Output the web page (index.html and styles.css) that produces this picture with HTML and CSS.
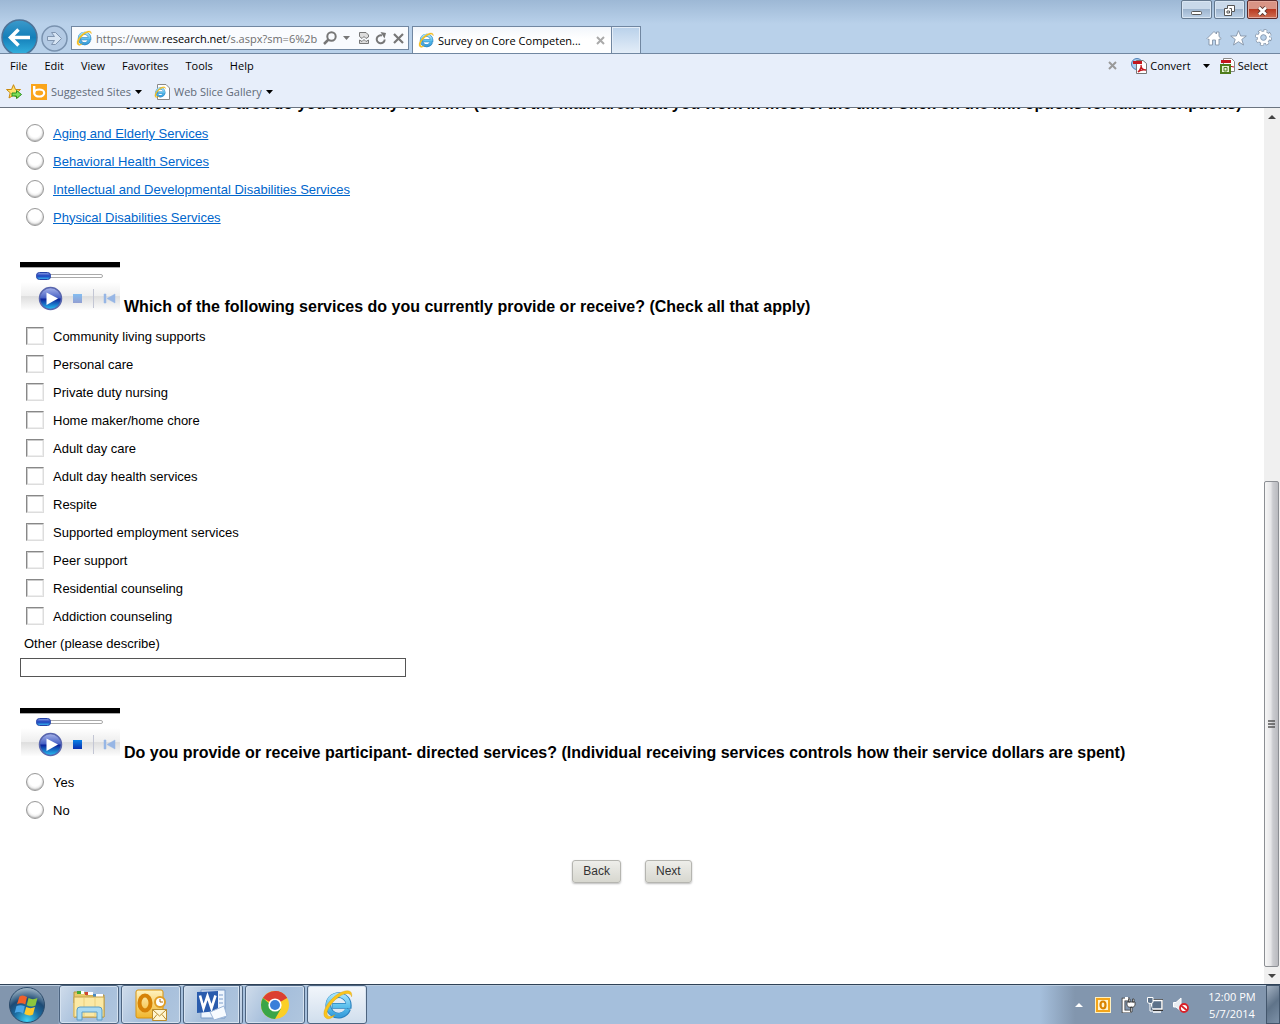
FILE: index.html
```html
<!DOCTYPE html>
<html lang="en">
<head>
    <meta charset="UTF-8">
    <meta name="viewport" content="width=device-width, initial-scale=1.0">
    <title>Survey on Core Competencies</title>
    <link rel="stylesheet" href="styles.css">
</head>
<body>
    <!-- shared icons -->
    <svg class="defs" width="0" height="0" aria-hidden="true">
        <defs>
            <linearGradient id="ieBlue" x1="0" y1="0" x2="0" y2="1">
                <stop offset="0" stop-color="#a5e2fa"/><stop offset="0.6" stop-color="#58bdec"/><stop offset="1" stop-color="#3a9fdc"/>
            </linearGradient>
            <linearGradient id="backBlue" x1="0" y1="0" x2="0" y2="1">
                <stop offset="0" stop-color="#3c9acb"/><stop offset="0.5" stop-color="#147fb9"/><stop offset="1" stop-color="#35b3e0"/>
            </linearGradient>
            <linearGradient id="playBlue" x1="0" y1="0" x2="0" y2="1">
                <stop offset="0" stop-color="#a9b5ea"/><stop offset="0.48" stop-color="#4660c4"/><stop offset="0.52" stop-color="#0b2098"/><stop offset="1" stop-color="#27c4f5"/>
            </linearGradient>
            <linearGradient id="knobBlue" x1="0" y1="0" x2="0" y2="1">
                <stop offset="0" stop-color="#8ba0e6"/><stop offset="0.5" stop-color="#1c3fbc"/><stop offset="1" stop-color="#3cc0f4"/>
            </linearGradient>
            <linearGradient id="stopBlue" x1="0" y1="0" x2="0" y2="1">
                <stop offset="0" stop-color="#0a82e6"/><stop offset="1" stop-color="#0a2fae"/>
            </linearGradient>
            <linearGradient id="stopPale" x1="0" y1="0" x2="0" y2="1">
                <stop offset="0" stop-color="#84bdf0"/><stop offset="1" stop-color="#929fd2"/>
            </linearGradient>
            <linearGradient id="playerBar" x1="0" y1="0" x2="0" y2="1">
                <stop offset="0" stop-color="#ffffff"/><stop offset="0.5" stop-color="#eeeeee"/><stop offset="0.52" stop-color="#dedede"/><stop offset="1" stop-color="#fdfdfd"/>
            </linearGradient>
            <radialGradient id="orb" cx="0.5" cy="0.95" r="0.95">
                <stop offset="0" stop-color="#3fd4f5"/><stop offset="0.4" stop-color="#1b6a9f"/><stop offset="0.65" stop-color="#1d4a74"/><stop offset="1" stop-color="#a8bccb"/>
            </radialGradient>
            <linearGradient id="gold" x1="0" y1="0" x2="0" y2="1">
                <stop offset="0" stop-color="#fff3c0"/><stop offset="1" stop-color="#f0b52c"/>
            </linearGradient>
        </defs>
        <symbol id="ie" viewBox="0 0 32 32">
            <path d="M27 20.500A10.500 10.500 0 1 1 27.600 17.500H10.500" fill="none" stroke="#2a80bd" stroke-width="6"/>
            <path d="M26.500 20.500A10.500 10.500 0 1 1 27.200 17.500H11" fill="none" stroke="url(#ieBlue)" stroke-width="4.400"/>
            <path d="M5 30.500C-2.500 27 5 13 16 5.500C24 0.500 32 0 30.500 8C29.500 3.500 24 3.500 17.500 8C8 15 2.500 25 6.500 28C8.500 29.200 11 28 13.500 26.500C11 29.500 8 31.500 5 30.500Z" fill="#fbc51c" stroke="#d99a0b" stroke-width="0.400"/>
        </symbol>
        <symbol id="player" viewBox="0 0 100 50">
            <path d="M0 0H100V5H0Z" fill="#000"/>
            <path d="M0 5.500H100" stroke="#aaa"/>
            <path d="M1 20H100V48H1Z" fill="url(#playerBar)"/>
            <rect x="28.500" y="12.500" width="54" height="3" rx="1.500" fill="#fff" stroke="#aaa"/>
            <rect x="16.500" y="10.500" width="14" height="7" rx="3" fill="url(#knobBlue)" stroke="#2340a6"/>
            <circle cx="30.500" cy="36.500" r="11" fill="url(#playBlue)" stroke="#5865ad" stroke-width="1.500"/>
            <path d="M26.500 30.500L38 36.500L26.500 43Z" fill="#fff"/>
            <path d="M73.500 27V46" stroke="#c3c6d4"/>
            <path d="M84 32H86V41H84ZM95 32V41L87 36.500Z" fill="#97b6e5" stroke="#97b6e5" stroke-width="0.500"/>
        </symbol>
    </svg>

    <header class="browser">
        <div class="titlebar">
            <button class="back" aria-label="Back to previous page">
                <svg width="37" height="37" viewBox="0 0 37 37"><circle cx="18.500" cy="18.500" r="17.500" fill="url(#backBlue)" stroke="#4f7397" stroke-width="1.500"/><path d="M9 18.500H29M17.500 10.500L9.500 18.500L17.500 26.500" fill="none" stroke="#fff" stroke-width="3.500"/></svg>
            </button>
            <button class="forward" aria-label="Forward">
                <svg width="27" height="27" viewBox="0 0 27 27"><circle cx="13.500" cy="13.500" r="12.500" fill="#b3cae4" stroke="#7992af" stroke-width="1.500"/><path d="M6.500 11.500H13.500L10.500 7.500H14.500L20.500 13.500L14.500 19.500H10.500L13.500 15.500H6.500Z" fill="#d6e4f3" stroke="#8095b0"/></svg>
            </button>
            <div class="address">
                <svg width="16" height="16"><use href="#ie"/></svg>
                <div class="url" role="textbox" aria-label="Address">https://www.<span>research.net</span>/s.aspx?sm=6%2b</div>
                <button aria-label="Search"><svg width="14" height="14" viewBox="0 0 14 14"><circle cx="8.500" cy="5.500" r="4.200" fill="none" stroke="#777" stroke-width="2"/><path d="M5.500 8.500L1 13" stroke="#777" stroke-width="2.500"/></svg></button>
                <button aria-label="Show address list"><svg width="7" height="4" viewBox="0 0 7 4"><path d="M0 0H7L3.500 4Z" fill="#777"/></svg></button>
                <button class="compat" aria-label="Compatibility view"><svg width="10" height="12" viewBox="0 0 10 12"><path d="M0.500 4.500V0.500H7L9.500 3V5L7 6.500L5 4.500L3 6.500ZM0.500 8L3 9.500L5 7.500L7 9.500L9.500 8V11.500H0.500Z" fill="#ddd" stroke="#777"/></svg></button>
                <button aria-label="Refresh"><svg width="12" height="13" viewBox="0 0 12 13"><path d="M7 3.500A4 4 0 1 0 9.700 7.500" fill="none" stroke="#777" stroke-width="2"/><path d="M5.500 0L11 1L9.500 6.500Z" fill="#777"/></svg></button>
                <button aria-label="Stop"><svg width="11" height="11" viewBox="0 0 11 11"><path d="M1 1L10 10M10 1L1 10" stroke="#777" stroke-width="2.200"/></svg></button>
            </div>
            <div class="tab">
                <svg width="16" height="16"><use href="#ie"/></svg>
                <span>Survey on Core Competen...</span>
                <button aria-label="Close tab"><svg width="9" height="9" viewBox="0 0 9 9"><path d="M1 1L8 8M8 1L1 8" stroke="#aaa" stroke-width="2"/></svg></button>
            </div>
            <button class="new-tab" aria-label="New tab"></button>
            <div class="corner">
                <div class="window-buttons">
                    <button aria-label="Minimize"><svg width="13" height="13" viewBox="0 0 13 13"><rect x="1.500" y="7.500" width="10" height="3" rx="1" fill="#fff" stroke="#555"/></svg></button>
                    <button aria-label="Restore"><svg width="13" height="13" viewBox="0 0 13 13"><path d="M4.500 1.500H11.500V7.500H8.500V11.500H1.500V4.500H4.500Z" fill="#fff" stroke="#555"/><path d="M4 7H6.500V9H4ZM6.500 4.500H8.500V7" fill="none" stroke="#555"/></svg></button>
                    <button class="close" aria-label="Close"><svg width="13" height="12" viewBox="0 0 13 12"><path d="M3 2.500L10 9.500M10 2.500L3 9.500" stroke="#59362f" stroke-width="4.500"/><path d="M3 2.500L10 9.500M10 2.500L3 9.500" stroke="#fff" stroke-width="2.500"/></svg></button>
                </div>
                <div class="tools">
                    <button aria-label="Home"><svg width="16" height="16" viewBox="0 0 16 16"><path d="M1 8.500L8 1.500L10.500 4V2H13V6.500L15.200 8.500L14 9.500L13 9V15H9.500V10H6.500V15H3V9L2 9.500Z" fill="#fff" stroke="#8494a8" stroke-width="0.900"/></svg></button>
                    <button aria-label="Favorites"><svg width="17" height="16" viewBox="0 0 17 16"><path d="M8.500 0.700L10.700 6H16.300L11.800 9.400L13.500 15L8.500 11.700L3.500 15L5.200 9.400L0.700 6H6.300Z" fill="#fff" stroke="#8494a8" stroke-width="0.900"/></svg></button>
                    <button aria-label="Settings"><svg width="17" height="17" viewBox="0 0 17 17"><circle cx="8.500" cy="8.500" r="6.700" fill="none" stroke="#8494a8" stroke-width="3.400" stroke-dasharray="3.200 2.060"/><circle cx="8.500" cy="8.500" r="5" fill="none" stroke="#8494a8" stroke-width="3.400"/><circle cx="8.500" cy="8.500" r="6.500" fill="none" stroke="#fff" stroke-width="2.400" stroke-dasharray="2.300 2.805"/><circle cx="8.500" cy="8.500" r="4.500" fill="#b9d1ea" stroke="#fff" stroke-width="2.800"/><circle cx="8.500" cy="8.500" r="2.800" fill="#b9d1ea" stroke="#8494a8" stroke-width="0.800"/></svg></button>
                </div>
            </div>
        </div>

        <div class="menu-row">
            <nav class="menu">
                <a href="#">File</a>
                <a href="#">Edit</a>
                <a href="#">View</a>
                <a href="#">Favorites</a>
                <a href="#">Tools</a>
                <a href="#">Help</a>
            </nav>
            <div class="addons">
                <button aria-label="Close toolbar"><svg width="9" height="9" viewBox="0 0 9 9"><path d="M1 1L8 8M8 1L1 8" stroke="#999" stroke-width="2"/></svg></button>
                <button class="convert">
                    <svg width="17" height="16" viewBox="0 0 17 16"><circle cx="6" cy="6" r="5.500" fill="#a9cdf0" stroke="#4d7fb5"/><path d="M5.500 2.500H12L15.500 5.500V15.500H5.500Z" fill="#fff" stroke="#777"/><path d="M2 3H11V6H2Z" fill="#c3161c"/><path d="M7 14C10 11 10.500 8 10 7C10 11 12 12 15 12C12 11.500 9 12 7 14Z" fill="none" stroke="#c3161c" stroke-width="1.300"/></svg>
                    Convert
                </button>
                <button aria-label="Convert options"><svg width="7" height="4" viewBox="0 0 7 4"><path d="M0 0H7L3.500 4Z" fill="#000"/></svg></button>
                <button class="select">
                    <svg width="16" height="16" viewBox="0 0 16 16"><path d="M3.500 0.500H11.500L14.500 3.500V13.500H3.500Z" fill="#fff" stroke="#888"/><path d="M1 2H11V5H1Z" fill="#c3161c"/><path d="M9 8L14 9" stroke="#c3161c"/><rect x="1" y="7" width="9" height="8" fill="#e9f3d8" stroke="#4f7d1c" stroke-width="2"/><path d="M4 9.500H7V13H4Z" fill="none" stroke="#4f7d1c"/></svg>
                    Select
                </button>
            </div>
        </div>

        <div class="favorites">
            <button aria-label="Add to favorites"><svg width="17" height="16" viewBox="0 0 17 16"><path d="M7.500 0.700L9.500 5.500H14.500L10.800 8.800L12 14L7.500 11.200L3 14L4.200 8.800L0.500 5.500H5.500Z" fill="#ffe16a" stroke="#c9890f"/><path d="M6 9H10.500V6.500L15.500 10.500L10.500 14.500V12H6Z" fill="#7ee05a" stroke="#2b8f1f"/></svg></button>
            <a href="#" class="suggested">
                <svg width="16" height="16" viewBox="0 0 16 16"><path d="M0 0H16V16H0Z" fill="#faa51a"/><path d="M3.200 2V8.500" stroke="#fff" stroke-width="2.400"/><ellipse cx="8.200" cy="9" rx="5" ry="3.500" fill="none" stroke="#fff" stroke-width="2.200"/></svg>
                Suggested Sites
                <svg width="7" height="4" viewBox="0 0 7 4"><path d="M0 0H7L3.500 4Z" fill="#000"/></svg>
            </a>
            <a href="#">
                <svg width="16" height="16" viewBox="0 0 16 16"><path d="M3.500 0.500H12L15.500 4V15.500H3.500Z" fill="#fff" stroke="#888"/><use href="#ie" width="12" height="12" y="2"/></svg>
                Web Slice Gallery
                <svg width="7" height="4" viewBox="0 0 7 4"><path d="M0 0H7L3.500 4Z" fill="#000"/></svg>
            </a>
        </div>
    </header>

    <div class="viewport">
        <main class="page">
            <form class="survey">
                <section class="question">
                    <div class="question-head">
                        <svg class="player" width="100" height="50"><use href="#player"/><rect x="53" y="32" width="9" height="9" fill="url(#stopPale)"/></svg>
                        <h2>Which service area do you currently work in? (Select the main area that you work in most of the time. Click on the link options for full descriptions)</h2>
                    </div>
                    <div class="option"><input type="radio" name="area" aria-label="Aging and Elderly Services"><a href="#">Aging and Elderly Services</a></div>
                    <div class="option"><input type="radio" name="area" aria-label="Behavioral Health Services"><a href="#">Behavioral Health Services</a></div>
                    <div class="option"><input type="radio" name="area" aria-label="Intellectual and Developmental Disabilities Services"><a href="#">Intellectual and Developmental Disabilities Services</a></div>
                    <div class="option"><input type="radio" name="area" aria-label="Physical Disabilities Services"><a href="#">Physical Disabilities Services</a></div>
                </section>

                <section class="question">
                    <div class="question-head">
                        <svg class="player" width="100" height="50"><use href="#player"/><rect x="53" y="32" width="9" height="9" fill="url(#stopPale)"/></svg>
                        <h2>Which of the following services do you currently provide or receive? (Check all that apply)</h2>
                    </div>
                    <label class="option"><input type="checkbox" name="service">Community living supports</label>
                    <label class="option"><input type="checkbox" name="service">Personal care</label>
                    <label class="option"><input type="checkbox" name="service">Private duty nursing</label>
                    <label class="option"><input type="checkbox" name="service">Home maker/home chore</label>
                    <label class="option"><input type="checkbox" name="service">Adult day care</label>
                    <label class="option"><input type="checkbox" name="service">Adult day health services</label>
                    <label class="option"><input type="checkbox" name="service">Respite</label>
                    <label class="option"><input type="checkbox" name="service">Supported employment services</label>
                    <label class="option"><input type="checkbox" name="service">Peer support</label>
                    <label class="option"><input type="checkbox" name="service">Residential counseling</label>
                    <label class="option"><input type="checkbox" name="service">Addiction counseling</label>
                    <label class="other" for="other">Other (please describe)</label>
                    <input type="text" id="other" name="other">
                </section>

                <section class="question">
                    <div class="question-head">
                        <svg class="player" width="100" height="50"><use href="#player"/><rect x="53" y="32" width="9" height="9" fill="url(#stopBlue)"/></svg>
                        <h2>Do you provide or receive participant- directed services? (Individual receiving services controls how their service dollars are spent)</h2>
                    </div>
                    <label class="option"><input type="radio" name="directed">Yes</label>
                    <label class="option"><input type="radio" name="directed">No</label>
                </section>

                <div class="form-buttons">
                    <button type="button">Back</button>
                    <button type="button">Next</button>
                </div>
            </form>
        </main>
        <div class="scrollbar">
            <button aria-label="Scroll up"><svg width="8" height="4" viewBox="0 0 8 4"><path d="M0 4H8L4 0Z" fill="#444"/></svg></button>
            <div class="track"></div>
            <div class="thumb"><svg width="8" height="8" viewBox="0 0 8 8"><path d="M0 1H7M0 4H7M0 7H7" stroke="#555" stroke-width="1.500"/></svg></div>
            <button aria-label="Scroll down"><svg width="8" height="4" viewBox="0 0 8 4"><path d="M0 0H8L4 4Z" fill="#444"/></svg></button>
        </div>
    </div>

    <footer class="taskbar">
        <button class="start" aria-label="Start">
            <svg width="38" height="38" viewBox="0 0 38 38"><circle cx="19" cy="19" r="17.500" fill="url(#orb)" stroke="#2c4b6b"/><path d="M11.500 10.500C14 9 16.500 9.500 19 11L17.300 18.500C14.500 17 12 17 9 18Z" fill="#f0602a"/><path d="M20.500 12C23.500 13.500 26.500 13.500 29.500 12L27.500 19.500C24.500 21 21.500 20.500 18.700 19.200Z" fill="#8cc63e"/><path d="M8.500 20C11.500 18.700 14 18.900 16.800 20.300L15 27.500C12 25.700 9.500 25.700 6.700 27Z" fill="#4aa6e8"/><path d="M18.200 21C21 22.500 24 22.500 27 21L25 28.500C22.500 30 19.500 29.500 16.300 28Z" fill="#fdc92b"/></svg>
        </button>
        <button class="task" aria-label="Windows Explorer">
            <svg width="34" height="32" viewBox="0 0 34 32"><path d="M2 3H12L14 6H32V28H2Z" fill="#e8c869" stroke="#b6913c"/><path d="M5 2H9V5H5Z" fill="#41a832"/><path d="M9 2H12V5H9Z" fill="#fff"/><path d="M13 3H16V6H13Z" fill="#d14432"/><path d="M16 3H21V6H16Z" fill="#fff"/><path d="M21 5H24V8H21Z" fill="#4589c5"/><path d="M24 5H31V8H24Z" fill="#fff"/><path d="M2 8H32V28H2Z" fill="#fbe9a5" stroke="#c5a24b"/><path d="M2 28V14M12 28V9M23 28V9" stroke="#ebcf7c"/><path d="M5 31V21Q5 18 8 18H27Q30 18 30 21V31H25V23H10V31Z" fill="#a9daf3" stroke="#5a9dc6"/></svg>
        </button>
        <button class="task" aria-label="Outlook">
            <svg width="34" height="32" viewBox="0 0 34 32"><rect x="2" y="1" width="27" height="28" rx="2" fill="url(#gold)" stroke="#d9930f"/><ellipse cx="11" cy="14" rx="5.500" ry="7.500" fill="none" stroke="#d68207" stroke-width="4"/><circle cx="26" cy="13" r="5" fill="#fff" stroke="#e09d24" stroke-width="2"/><path d="M26 10V13H29" fill="none" stroke="#b26b00"/><path d="M18.500 20.500H32.500V31.500H18.500Z" fill="#fff6d2" stroke="#b98b2d"/><path d="M18.500 20.500L25.500 27L32.500 20.500M18.500 31L23 25.500M32.500 31L28 25.500" fill="none" stroke="#b98b2d"/></svg>
        </button>
        <button class="task stacked" aria-label="Word">
            <svg width="34" height="32" viewBox="0 0 34 32"><path d="M6 1H30V29H6Z" fill="#eef5fd" stroke="#7a9bc7"/><path d="M24 6H28M24 10H28M24 14H28" stroke="#7d9dcb"/><path d="M2 3L23 2V22L2 24Z" fill="#2a5cad"/><path d="M5 6.500L8.500 19L12.500 7L16.500 19L20.500 6.500" fill="none" stroke="#fff" stroke-width="2.600"/><path d="M15 23L29 17L32 27L19 31Z" fill="#f7fbff" stroke="#9bb5d8"/></svg>
        </button>
        <button class="task" aria-label="Chrome">
            <svg width="30" height="30" viewBox="0 0 30 30"><circle cx="15" cy="15" r="14" fill="#fbcf26"/><path d="M15 15L2.880 8A14 14 0 0 1 27.120 8Z" fill="#db3f32"/><path d="M15 8H27.120A14 14 0 0 0 15 1Z" fill="#db3f32"/><path d="M2.880 8A14 14 0 0 0 15 29L21 18.500H15Z" fill="#3aa547"/><circle cx="15" cy="15" r="6.600" fill="#fff"/><circle cx="15" cy="15" r="5" fill="#3a7fd9"/></svg>
        </button>
        <button class="task active" aria-label="Internet Explorer">
            <svg width="31" height="31"><use href="#ie"/></svg>
        </button>
        <div class="tray">
            <button aria-label="Show hidden icons"><svg width="8" height="4" viewBox="0 0 8 4"><path d="M0 4H8L4 0Z" fill="#fff"/></svg></button>
            <svg width="16" height="16" viewBox="0 0 16 16"><rect x="0.500" y="0.500" width="15" height="15" fill="#f3a51a" stroke="#fff0c0"/><rect x="3" y="3" width="10" height="10" fill="#fff3cf"/><ellipse cx="8" cy="8" rx="2.500" ry="3.500" fill="none" stroke="#d98200" stroke-width="2.200"/></svg>
            <svg width="16" height="16" viewBox="0 0 16 16"><path d="M9 2.500H2.500V14.500H10M4 1H7" fill="none" stroke="#333" stroke-width="3.500"/><path d="M9 2.500H2.500V14.500H10M4 1H7" fill="none" stroke="#fff" stroke-width="2"/><path d="M6 5H14V8Q14 10.500 10 10.500Q6 10.500 6 8ZM7.500 2H9V5H7.500ZM11.500 2H13V5H11.500ZM9.500 10H11V15H9.500Z" fill="#fff" stroke="#333" stroke-width="0.800"/></svg>
            <svg width="16" height="16" viewBox="0 0 16 16"><path d="M4.500 3.500H15.500V12.500H4.500Z" fill="#5d7289" stroke="#333" stroke-width="3"/><path d="M4.500 3.500H15V12H4.500Z" fill="#5d7289" stroke="#fff" stroke-width="1.500"/><path d="M6 15H14" stroke="#fff" stroke-width="1.500"/><path d="M0.500 0.500H6V5Q6 6.500 3.500 6.500Q0.500 6.500 0.500 5ZM3 6V14H6" fill="#5d7289" stroke="#fff"/></svg>
            <svg width="16" height="16" viewBox="0 0 16 16"><path d="M0.500 5.500H3L8 1V14L3 10H0.500Z" fill="#e9edf2" stroke="#fff"/><circle cx="11" cy="11" r="4" fill="#fff" stroke="#d9232a" stroke-width="1.800"/><path d="M8 8.500L14 13.500" stroke="#d9232a" stroke-width="1.800"/></svg>
            <div class="clock">12:00 PM<br>5/7/2014</div>
            <button class="show-desktop" aria-label="Show desktop"></button>
        </div>
    </footer>
</body>
</html>
```

FILE: styles.css
```css
* { box-sizing: border-box; }
body { margin: 0; height: 100vh; display: flex; flex-direction: column; background: #fff; font-family: "Liberation Sans", Arial, sans-serif; font-size: 13px; color: #000; overflow: hidden; }
button { padding: 0; border: none; background: none; font: inherit; color: inherit; display: flex; align-items: center; justify-content: center; }
svg { display: block; flex: none; }
a { color: inherit; text-decoration: none; }
.defs { position: absolute; }

/* browser frame */
.browser { flex: none; background: #e7eefa; border-bottom: 1px solid #6b7480; font-family: "Open Sans", "Segoe UI", sans-serif; font-size: 11px; }
.titlebar { display: flex; align-items: flex-end; height: 54px; padding-left: 1px; background: linear-gradient(#9db8d5, #b9d1ea 24px); border-bottom: 1px solid #7187a1; overflow: hidden; }
.back { height: 34px; align-items: flex-start; }
.forward { margin: 0 3px 1px; }
.address { display: flex; align-items: center; gap: 8px; width: 338px; height: 24px; margin-bottom: 3px; padding: 0 5px 0 4px; background: #f9fbfe; border: 1px solid #7187a1; }
.url { flex: 1; min-width: 0; margin: 0 -4px; white-space: nowrap; color: #6d6d6d; }
.url span { color: #000; }
.address button { margin: 0 -1px; }
.address .compat { margin-left: 2px; }
.tab { display: flex; align-items: center; gap: 4px; width: 200px; height: 27px; margin-left: 3px; padding: 0 6px 0 5px; background: linear-gradient(#f2f6fb, #fff 12px); border: 1px solid #7187a1; border-bottom: none; }
.tab span { flex: 1; white-space: nowrap; }
.new-tab { width: 29px; height: 27px; background: linear-gradient(#b9d1ea, #e3edf8); border: 1px solid #7187a1; border-left: none; border-bottom: none; box-shadow: inset 0 0 0 1px #e3edf8; }
.corner { align-self: stretch; margin-left: auto; display: flex; flex-direction: column; justify-content: space-between; align-items: flex-end; padding: 0 2px 7px 0; }
.window-buttons { display: flex; gap: 2px; }
.window-buttons button { width: 31px; height: 19px; padding-top: 2px; background: linear-gradient(#c9d9ea 50%, #9eb5cf 50%, #bdd1e7); border: 1px solid #65798f; border-radius: 2px; box-shadow: inset 0 0 0 1px #d9e6f3; }
.window-buttons .close { background: linear-gradient(#d99485 45%, #b93a22 50%, #cf6f53); border-color: #5c2a2a; box-shadow: inset 0 0 0 1px #e4a99c; }
.tools { display: flex; gap: 8px; padding-right: 6px; }

.menu-row { display: flex; justify-content: space-between; height: 23px; padding: 0 12px 0 10px; }
.menu { display: flex; align-items: center; gap: 17px; }
.addons { display: flex; align-items: center; gap: 12px; }
.addons button { gap: 2px; }
.convert { margin-left: 2px; }
.select { margin-left: -2px; }
.favorites { display: flex; align-items: center; height: 30px; gap: 8px; padding: 2px 0 2px 6px; color: #5f6a78; }
.favorites a { display: flex; align-items: center; gap: 4px; line-height: 14px; }
.suggested { margin-right: 4px; }

/* survey page */
.viewport { flex: 1; min-height: 0; display: flex; }
.page { flex: 1; min-width: 0; overflow: hidden; }
.survey { margin-top: -49px; padding: 0 20px; }
.question { margin-bottom: 31px; }
.question-head { display: flex; align-items: flex-end; gap: 4px; height: 60px; padding-bottom: 10px; }
h2 { margin: 0 0 -4px; font-size: 16px; line-height: 18px; white-space: nowrap; }
.option { display: flex; align-items: center; gap: 9px; height: 28px; padding-left: 6px; }
.option a { color: #0066cc; text-decoration: underline; }
.option input { appearance: none; flex: none; width: 18px; height: 18px; margin: 0; background: #fff; }
.option input[type="radio"] { border: 1px solid #999; border-radius: 50%; background: radial-gradient(circle at 50% 40%, #fff 45%, #ddd 80%); box-shadow: inset 0 -1px 1px #bbb; }
.option input[type="checkbox"] { border: 1px solid #888; border-right-color: #ddd; border-bottom-color: #ddd; box-shadow: inset 1px 1px #ccc, inset -1px -1px #eee; }
.option input:checked { background: #0066cc; }
.other { display: block; height: 28px; padding-left: 4px; line-height: 28px; }
#other { display: block; width: 386px; height: 19px; border: 1px solid #555; padding: 0 4px; font: inherit; }
.form-buttons { display: flex; justify-content: center; gap: 24px; margin-top: 36px; }
.form-buttons button { height: 23px; padding: 0 10px 2px; background: linear-gradient(#eeeeea, #d7d7cf); border: 1px solid #b5b5b0; border-radius: 3px; box-shadow: 0 1px 2px #bbb; color: #333; font-size: 12px; }

/* scrollbar */
.scrollbar { display: flex; flex-direction: column; width: 16px; background: #f0f0f0; }
.scrollbar button { height: 17px; }
.track { flex: 356; }
.thumb { flex: 485; display: flex; align-items: center; justify-content: center; width: 15px; border: 1px solid #8c8f94; border-radius: 2px; background: linear-gradient(90deg, #f6f6f6, #e6e6e8 45%, #cbccd0 60%, #b9babf); }

/* taskbar */
.taskbar { flex: none; display: flex; height: 40px; border-top: 1px solid #2f4257; box-shadow: inset 0 1px #b8cadd; background: linear-gradient(90deg, #8296ae 58px, #a5bfdc 60px, #a5bfdc calc(100% - 240px), #8296ae calc(100% - 205px)); font-family: "Open Sans", "Segoe UI", sans-serif; font-size: 11px; color: #fff; }
.start { width: 54px; margin-right: 5px; }
.task { width: 60px; margin-right: 2px; border: 1px solid #4d6480; border-radius: 3px; background: linear-gradient(120deg, #cfdceb, #a5bedb 50%, #b0c6de); box-shadow: inset 0 0 0 1px #d5e2f0; }
.task.stacked { border-right: 4px double #4d6480; }
.task.active { background: linear-gradient(#f2f6fb, #d0deed); }
.tray { display: flex; align-items: center; gap: 10px; margin-left: auto; }
.tray button:first-child { margin-right: 2px; }
.clock { width: 60px; margin-right: -2px; margin-left: 3px; line-height: 17px; text-align: center; }
.tray .show-desktop { align-self: stretch; width: 14px; margin-left: -4px; border: 1px solid #43566c; background: linear-gradient(135deg, #a3b1c1, #5f7389 50%, #7d91a8); }
```
